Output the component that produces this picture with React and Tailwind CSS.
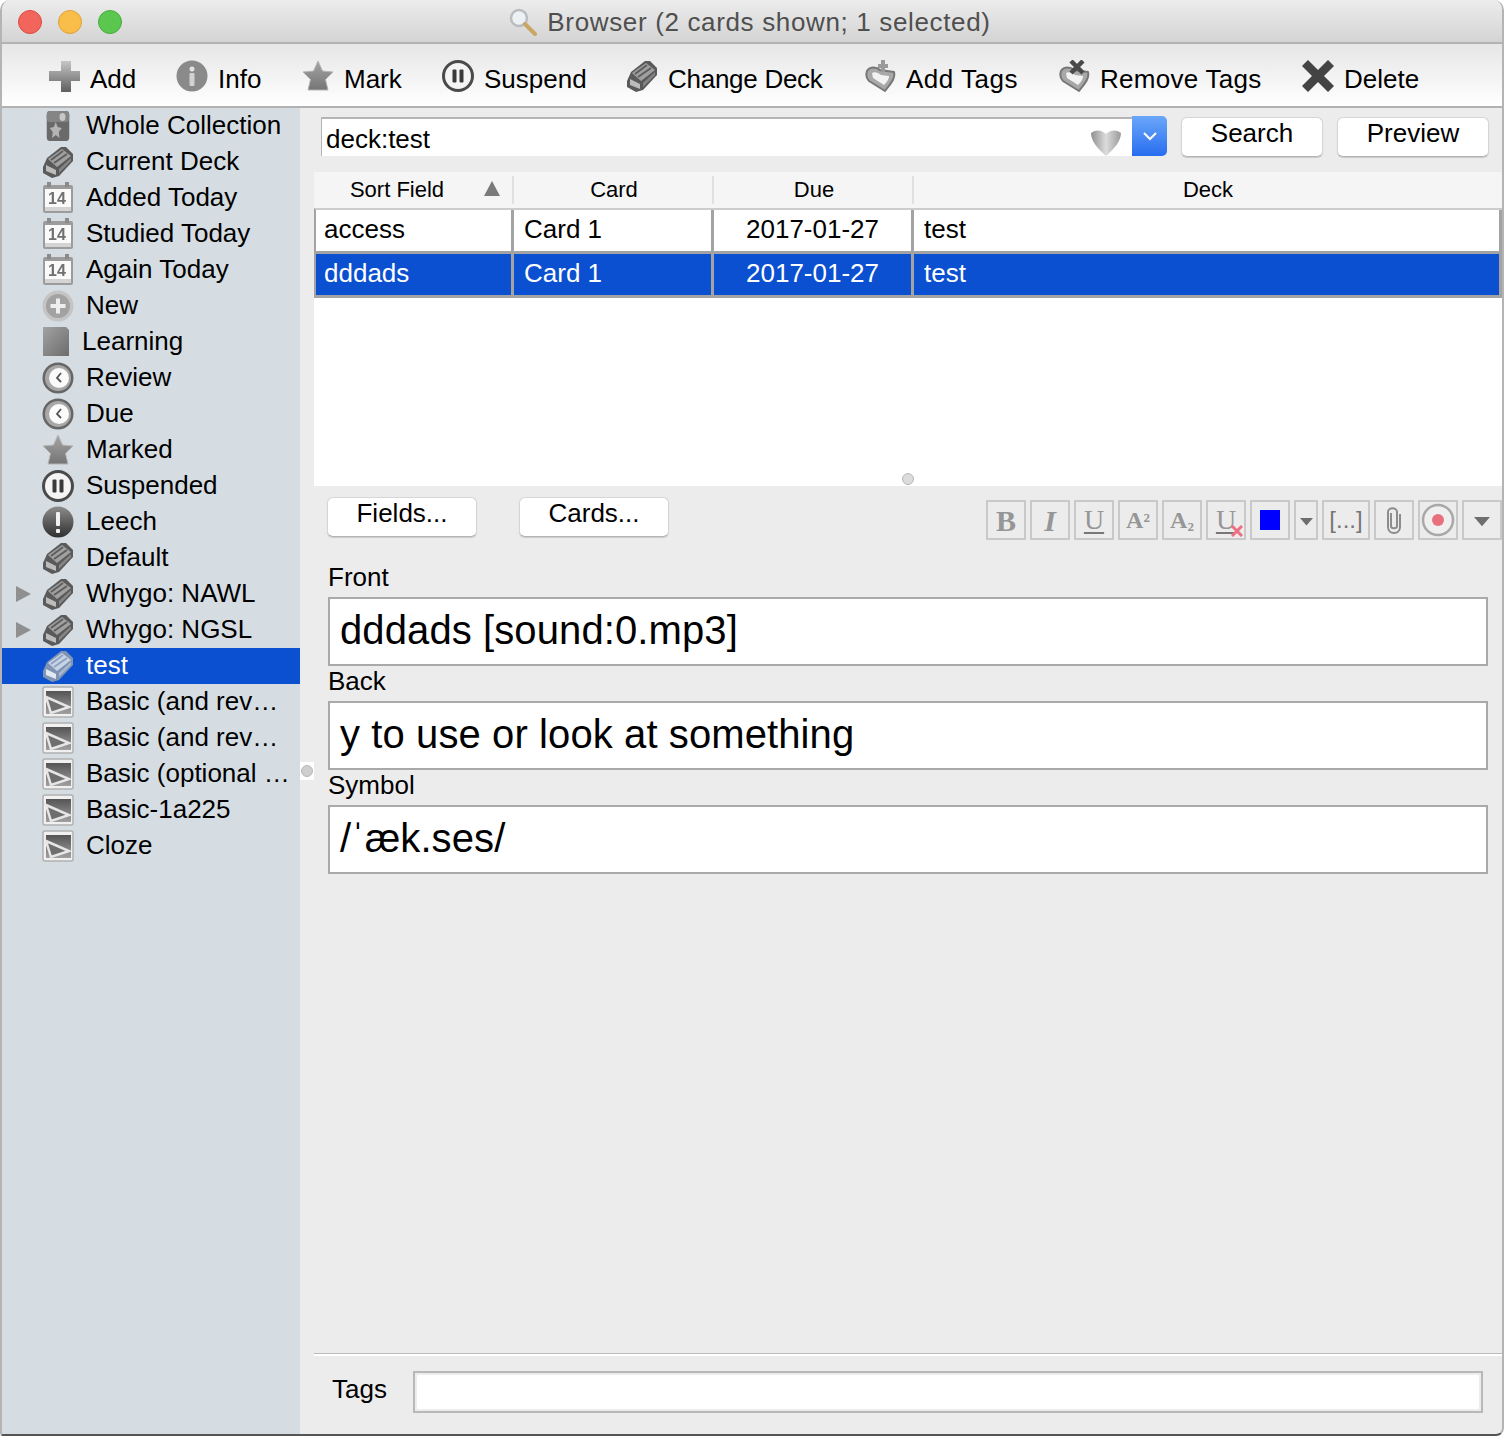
import React from 'react';

// toolbar and sidebar icons, all drawn in the app's grey style
const Deck = ({ selected }) => (
  <svg viewBox="0 0 32 32" className="w-[32px] h-[32px] blur-[0.5px]">
    <path d="M1 21 L5 12 L19 1 L24 1 L31 8 L31 15 L17 30 L10 32 L1 27 Z" fill={selected ? '#7f93b3' : '#5a5a5a'} />
    <path d="M6 13 L20 3 L29 10 L15 21 Z" fill={selected ? '#c7d3e6' : '#a0a0a0'} />
    <path d="M9 14 L21 5 M12 17 L25 8" stroke={selected ? '#8ea2c0' : '#5e5e5e'} strokeWidth="2" />
    <path d="M4 19 L14 24 L14 29 L4 25 Z" fill={selected ? '#e1e8f2' : '#bcbcbc'} />
    <path d="M17 23 L29 12 L29 15 L17 27 Z" fill={selected ? '#a8b8d0' : '#858585'} />
  </svg>
);

const Calendar = () => (
  <svg viewBox="0 0 32 32" className="w-[32px] h-[32px] blur-[0.4px]">
    <rect x="1" y="3" width="30" height="28" rx="2" fill="#9c9c9c" />
    <rect x="5" y="0" width="4" height="5" fill="#8a8a8a" />
    <rect x="23" y="0" width="4" height="5" fill="#8a8a8a" />
    <rect x="3" y="7" width="26" height="18" fill="#fafafa" />
    <rect x="3" y="25" width="26" height="4" fill="#d4d4d4" />
    <text x="15" y="22" textAnchor="middle" fontSize="16" fontWeight="700" fill="#707070" fontFamily="Liberation Sans">14</text>
  </svg>
);

const Clock = () => (
  <svg viewBox="0 0 32 32" className="w-[32px] h-[32px] blur-[0.4px]">
    <circle cx="16" cy="16" r="15.5" fill="#666666" />
    <circle cx="16" cy="16" r="13" fill="#a8a8a8" />
    <circle cx="17" cy="16" r="10" fill="#fbfbfb" />
    <path d="M19 11 L15 16 L19 20" stroke="#555" strokeWidth="1.8" fill="none" />
  </svg>
);

const Star = () => (
  <svg viewBox="0 0 32 32" className="w-[32px] h-[32px] blur-[0.4px]">
    <defs>
      <linearGradient id="starFill" x1="0" y1="0" x2="0" y2="1">
        <stop offset="0" stopColor="#a4a4a4" />
        <stop offset="1" stopColor="#757575" />
      </linearGradient>
    </defs>
    <path d="M16 1 L20.5 11 L31 12 L23.5 19.5 L26 30 L6 30 L8.5 19.5 L1 12 L11.5 11 Z" fill="url(#starFill)" stroke="#b4b4b4" strokeWidth="1" strokeLinejoin="round" />
  </svg>
);

const Pause = () => (
  <svg viewBox="0 0 32 32" className="w-[32px] h-[32px] blur-[0.3px]">
    <circle cx="16" cy="16" r="14.5" fill="#f4f4f4" stroke="#4a4a4a" strokeWidth="3" />
    <rect x="10.5" y="9.5" width="4" height="13" rx="1" fill="#3a3a3a" />
    <rect x="17.5" y="9.5" width="4" height="13" rx="1" fill="#3a3a3a" />
  </svg>
);

const PlusCircle = () => (
  <svg viewBox="0 0 32 32" className="w-[32px] h-[32px] blur-[0.4px]">
    <circle cx="16" cy="16" r="15.5" fill="#c4c4c4" />
    <circle cx="16" cy="16" r="12" fill="#a2a2a2" />
    <path d="M16 8.5 V23.5 M8.5 16 H23.5" stroke="#eeeeee" strokeWidth="4" />
  </svg>
);

const Leech = () => (
  <svg viewBox="0 0 32 32" className="w-[32px] h-[32px] blur-[0.3px]">
    <defs>
      <linearGradient id="leechFill" x1="0" y1="0" x2="0" y2="1">
        <stop offset="0" stopColor="#8c8c8c" />
        <stop offset="1" stopColor="#2f2f2f" />
      </linearGradient>
    </defs>
    <circle cx="16" cy="16" r="15.5" fill="url(#leechFill)" />
    <rect x="14" y="6" width="4" height="14" rx="1" fill="#f2f2f2" />
    <rect x="14" y="23" width="4" height="4" rx="1" fill="#f2f2f2" />
  </svg>
);

const Collection = () => (
  <svg viewBox="0 0 32 32" className="w-[24px] h-[32px] blur-[0.4px]" preserveAspectRatio="none">
    <rect x="1" y="1" width="30" height="30" rx="4" fill="#6a6a6a" />
    <rect x="1" y="1" width="30" height="11" rx="4" fill="#858585" />
    <circle cx="22" cy="7" r="4" fill="#c8c8c8" />
    <path d="M13 12 L15.5 17 L21 18 L17 22 L18 28 L13 25 L8 28 L9 22 L5 18 L10.5 17 Z" fill="#b4b4b4" />
  </svg>
);

const Template = () => (
  <svg viewBox="0 0 32 32" className="w-[32px] h-[32px] blur-[0.4px]">
    <defs>
      <linearGradient id="templateFill" x1="0" y1="0" x2="0" y2="1">
        <stop offset="0" stopColor="#555555" />
        <stop offset="1" stopColor="#a0a0a0" />
      </linearGradient>
    </defs>
    <rect x="1" y="1" width="30" height="30" rx="2" fill="#f0f0f0" stroke="#b0b0b0" strokeWidth="1.5" />
    <rect x="4" y="5" width="25" height="23" fill="url(#templateFill)" />
    <path d="M4 11 L27 21 L9 27 Z" fill="#6e6e6e" stroke="#e6e6e6" strokeWidth="2.5" />
  </svg>
);

const Learning = () => (
  <svg viewBox="0 0 28 32" className="w-[28px] h-[32px] blur-[0.3px]">
    <defs>
      <linearGradient id="learnFill" x1="0" y1="0" x2="1" y2="1">
        <stop offset="0" stopColor="#a2a2a2" />
        <stop offset="1" stopColor="#6c6c6c" />
      </linearGradient>
    </defs>
    <path d="M1 1 H24 L27 4 V30 H1 Z" fill="url(#learnFill)" />
  </svg>
);

const AddPlus = () => (
  <svg viewBox="0 0 32 32" className="w-[32px] h-[32px] blur-[0.4px]">
    <defs>
      <linearGradient id="plusFill" x1="0" y1="0" x2="0" y2="1">
        <stop offset="0" stopColor="#c6c6c6" />
        <stop offset="1" stopColor="#5e5e5e" />
      </linearGradient>
    </defs>
    <path d="M13 1 H23 V11 H32 V21 H23 V32 H13 V21 H1 V11 H13 Z" fill="url(#plusFill)" />
  </svg>
);

const InfoCircle = () => (
  <svg viewBox="0 0 32 32" className="w-[32px] h-[32px] blur-[0.4px]">
    <circle cx="16" cy="16" r="15.5" fill="#8a8a8a" />
    <circle cx="16" cy="9" r="2.5" fill="#e2e2e2" />
    <rect x="13.5" y="13" width="5" height="13" rx="1" fill="#d2d2d2" />
  </svg>
);

const TagHeart = ({ remove }) => (
  <svg viewBox="0 0 32 32" className="w-[32px] h-[32px] blur-[0.4px]">
    <path d="M3 11 C6 6 13 7 16 10 L30 12 C32 20 24 26 21 31 L5 21 C2 18 2 14 3 11 Z" fill="#a8a8a8" stroke="#777" strokeWidth="2" strokeLinejoin="round" />
    <path d="M8 13 C11 11 15 13 17 15 L25 16 C25 20 22 23 20 25 L9 18 Z" fill="#f2f2f2" />
    {remove ? (
      <path d="M13 1 L25 13 M25 1 L13 13" stroke="#4a4a4a" strokeWidth="4.5" />
    ) : (
      <path d="M19 0 V12 M14 6 H24" stroke="#9a9a9a" strokeWidth="4" />
    )}
  </svg>
);

const DeleteX = () => (
  <svg viewBox="0 0 32 32" className="w-[32px] h-[32px] blur-[0.4px]">
    <path d="M6 6 L26 26 M26 6 L6 26" stroke="#444444" strokeWidth="8.5" strokeLinecap="square" />
  </svg>
);

const Heart = () => (
  <svg viewBox="0 0 32 28" className="w-[32px] h-[28px]">
    <defs>
      <linearGradient id="heartFill" x1="0" y1="0" x2="1" y2="0">
        <stop offset="0" stopColor="#8f8f8f" />
        <stop offset="0.5" stopColor="#dcdcdc" />
        <stop offset="1" stopColor="#9a9a9a" />
      </linearGradient>
    </defs>
    <path d="M1 4 C6 0 12 1 16 5 C20 1 26 0 31 4 C31 12 24 20 16 27 C8 20 1 12 1 4 Z" fill="url(#heartFill)" />
  </svg>
);

const Magnifier = () => (
  <svg viewBox="0 0 28 28" className="w-[28px] h-[28px]">
    <circle cx="10" cy="10" r="8" fill="#eef1f4" stroke="#b9bdc2" strokeWidth="2.5" />
    <path d="M16 16 L26 26" stroke="#c9a566" strokeWidth="4" strokeLinecap="round" />
  </svg>
);

const toolbarItems = [
  { icon: <AddPlus />, label: 'Add', width: 'w-[46px]' },
  { icon: <InfoCircle />, label: 'Info', width: 'w-[44px]' },
  { icon: <Star />, label: 'Mark', width: 'w-[58px]' },
  { icon: <Pause />, label: 'Suspend', width: 'w-[102px]' },
  { icon: <Deck />, label: 'Change Deck', width: 'w-[156px] tracking-[-0.27px]' },
  { icon: <TagHeart />, label: 'Add Tags', width: 'w-[112px] tracking-[0.5px]' },
  { icon: <TagHeart remove />, label: 'Remove Tags', width: 'w-[162px] tracking-[0.27px]' },
  { icon: <DeleteX />, label: 'Delete', width: 'w-[74px]' },
];

const sidebarItems = [
  { icon: <Collection />, label: 'Whole Collection' },
  { icon: <Deck />, label: 'Current Deck' },
  { icon: <Calendar />, label: 'Added Today' },
  { icon: <Calendar />, label: 'Studied Today' },
  { icon: <Calendar />, label: 'Again Today' },
  { icon: <PlusCircle />, label: 'New' },
  { icon: <Learning />, label: 'Learning', narrow: true },
  { icon: <Clock />, label: 'Review' },
  { icon: <Clock />, label: 'Due' },
  { icon: <Star />, label: 'Marked' },
  { icon: <Pause />, label: 'Suspended' },
  { icon: <Leech />, label: 'Leech' },
  { icon: <Deck />, label: 'Default' },
  { icon: <Deck />, label: 'Whygo: NAWL', arrow: true },
  { icon: <Deck />, label: 'Whygo: NGSL', arrow: true },
  { icon: <Deck selected />, label: 'test', selected: true },
  { icon: <Template />, label: 'Basic (and rev…' },
  { icon: <Template />, label: 'Basic (and rev…' },
  { icon: <Template />, label: 'Basic (optional …' },
  { icon: <Template />, label: 'Basic-1a225' },
  { icon: <Template />, label: 'Cloze' },
];

const rows = [
  { sort: 'access', card: 'Card 1', due: '2017-01-27', deck: 'test' },
  { sort: 'dddads', card: 'Card 1', due: '2017-01-27', deck: 'test', selected: true },
];

const fields = [
  { label: 'Front', value: 'dddads [sound:0.mp3]' },
  { label: 'Back', value: 'y to use or look at something' },
  { label: 'Symbol', value: '/ˈæk.ses/' },
];

const FormatButton = ({ className = 'w-[40px]', children }) => (
  <div className={`${className} h-[40px] border-2 border-[#c9c9c9] bg-[#ececec] flex items-center justify-center text-[#969696] font-['Liberation_Serif',serif]`}>
    {children}
  </div>
);

const SmallArrow = ({ w = 14 }) => (
  <svg viewBox="0 0 14 8" style={{ width: w }} className="mt-[4px]">
    <path d="M0 0 H14 L7 8 Z" fill="#6e6e6e" />
  </svg>
);

const PlainButton = ({ className, children }) => (
  <button className={`${className} h-[40px] pb-[9px] bg-white rounded-[6px] border border-[#d6d6d6] border-b-[#b5b5b5] shadow-[0_1px_1px_rgba(0,0,0,0.15)] text-[26px] leading-[30px] text-black text-center`}>
    {children}
  </button>
);

export default function App() {
  return (
    <div className="w-[1506px] h-[1436px] bg-white font-['Liberation_Sans',sans-serif] text-black overflow-hidden">
      <div className="relative w-[1504px] h-[1436px] flex flex-col bg-[#ececec] border-x-2 border-x-[#b4b4b4] border-b-2 border-b-[#555555] rounded-t-[10px] rounded-br-[8px] rounded-bl-[3px] overflow-hidden">

        {/* Title bar */}
        <div className="relative h-[44px] shrink-0 flex items-center justify-center gap-[10px] pt-[2px] bg-gradient-to-b from-[#ececec] to-[#d4d4d4] border-b-2 border-[#b2b2b2]">
          <div className="absolute left-[16px] top-[10px] flex gap-[16px]">
            <div className="w-[24px] h-[24px] rounded-full bg-[#f2655c] border border-[#dd4c43]" />
            <div className="w-[24px] h-[24px] rounded-full bg-[#f9bd4a] border border-[#dfa136]" />
            <div className="w-[24px] h-[24px] rounded-full bg-[#5cc74f] border border-[#47ad3c]" />
          </div>
          <Magnifier />
          <span className="mr-[4px] text-[26px] leading-[30px] text-[#4f4f4f] tracking-[0.65px]">Browser (2 cards shown; 1 selected)</span>
        </div>

        {/* Toolbar */}
        <div className="h-[64px] shrink-0 flex items-center gap-[40px] pl-[46px] pt-[2px] bg-gradient-to-b from-[#e6e6e6] to-white border-b-2 border-[#b2b2b2]">
          {toolbarItems.map(item => (
            <div key={item.label} className="flex items-center gap-[10px]">
              {item.icon}
              <span className={`${item.width} text-[26px] leading-[30px] mt-[6px] whitespace-nowrap`}>{item.label}</span>
            </div>
          ))}
        </div>

        <div className="flex flex-1 min-h-0">

          {/* Sidebar */}
          <div className="w-[298px] shrink-0 bg-[#d5dde2]">
            {sidebarItems.map((item, i) => (
              <div key={i} className={`h-[36px] flex items-center ${item.selected ? 'bg-[#0b50d0] text-white' : ''}`}>
                <div className="w-[40px] shrink-0 pl-[14px]">
                  {item.arrow && (
                    <svg viewBox="0 0 15 16" className="w-[15px] h-[16px]">
                      <path d="M0 0 L15 8 L0 16 Z" fill="#8f8f8f" />
                    </svg>
                  )}
                </div>
                <div className={`${item.narrow ? 'w-[28px]' : 'w-[32px]'} shrink-0 flex justify-center`}>{item.icon}</div>
                <span className="ml-[12px] pb-[2px] text-[26px] leading-[30px] whitespace-nowrap">{item.label}</span>
              </div>
            ))}
          </div>

          {/* Main pane */}
          <div className="relative flex-1 min-w-0 flex flex-col pt-[9px]">

            {/* Splitter handle */}
            <div className="absolute left-0 top-[654px] w-[14px] h-[18px] bg-white flex items-center justify-center">
              <div className="w-[12px] h-[12px] rounded-full bg-[#cfcfcf] border border-[#b8b8b8]" />
            </div>

            {/* Search row */}
            <div className="h-[40px] shrink-0 flex pl-[21px]">
              <div className="w-[811px] h-[39px] bg-white border-t-2 border-l border-[#b5b5b5] flex items-center justify-between pl-[4px] pr-[10px]">
                <span className="mt-[2px] text-[26px] leading-[30px]">deck:test</span>
                <div className="mt-[10px]"><Heart /></div>
              </div>
              <div className="w-[35px] h-[40px] -mt-[1px] rounded-r-[5px] bg-gradient-to-b from-[#6ba6f9] to-[#276cef] flex items-center justify-center">
                <svg viewBox="0 0 14 9" className="w-[14px] h-[9px]">
                  <path d="M1 1 L7 7 L13 1" stroke="white" strokeWidth="2" fill="none" />
                </svg>
              </div>
              <PlainButton className="w-[142px] ml-[14px]">Search</PlainButton>
              <PlainButton className="w-[152px] ml-[14px]">Preview</PlainButton>
            </div>

            {/* Card table */}
            <div className="relative h-[314px] shrink-0 mt-[15px] ml-[14px] bg-white">
              <div className="h-[36px] flex bg-[#f5f5f5] text-[22px] leading-[36px] text-center">
                <div className="relative w-[200px] pr-[34px] after:absolute after:right-0 after:top-[4px] after:h-[28px] after:w-[2px] after:bg-[#e0e0e0]">
                  Sort Field
                  <svg viewBox="0 0 16 15" className="absolute left-[170px] top-[9px] w-[16px] h-[15px]">
                    <path d="M8 0 L16 15 H0 Z" fill="#7a7a7a" />
                  </svg>
                </div>
                <div className="relative w-[200px] after:absolute after:right-0 after:top-[4px] after:h-[28px] after:w-[2px] after:bg-[#e0e0e0]">Card</div>
                <div className="relative w-[200px] after:absolute after:right-0 after:top-[4px] after:h-[28px] after:w-[2px] after:bg-[#e0e0e0]">Due</div>
                <div className="flex-1">Deck</div>
              </div>
              <div className="border-t-2 border-t-[#cccccc] border-l-2 border-l-[#a3a3a3]">
                {rows.map(row => (
                  <div
                    key={row.sort}
                    className={`flex h-[44px] leading-[38px] text-[26px] border-b-[3px] border-[#a3a3a3] ${row.selected ? 'bg-[#0b50d0] text-white' : 'bg-white'}`}
                  >
                    <div className="w-[198px] border-r-[3px] border-[#a3a3a3] pl-[8px]">{row.sort}</div>
                    <div className="w-[200px] border-r-[3px] border-[#a3a3a3] pl-[10px]">{row.card}</div>
                    <div className="w-[200px] border-r-[3px] border-[#a3a3a3] text-center">{row.due}</div>
                    <div className="flex-1 border-r-[3px] border-[#a3a3a3] pl-[10px]">{row.deck}</div>
                  </div>
                ))}
              </div>
              <div className="absolute left-[588px] top-[301px] w-[12px] h-[12px] rounded-full bg-[#dcdcdc] border border-[#b8b8b8]" />
            </div>

            {/* Note editor buttons */}
            <div className="h-[43px] shrink-0 mt-[11px] flex">
              <PlainButton className="w-[150px] ml-[27px]">Fields...</PlainButton>
              <PlainButton className="w-[150px] ml-[42px]">Cards...</PlainButton>
              <div className="ml-[317px] mt-[3px] flex gap-[4px]">
                <FormatButton><span className="text-[30px] font-bold">B</span></FormatButton>
                <FormatButton><span className="text-[30px] font-bold italic">I</span></FormatButton>
                <FormatButton><span className="text-[28px] underline underline-offset-[3px] decoration-[#777777]">U</span></FormatButton>
                <FormatButton><span className="text-[24px] font-bold">A<sup className="text-[13px]">2</sup></span></FormatButton>
                <FormatButton><span className="text-[24px] font-bold">A<sub className="text-[13px]">2</sub></span></FormatButton>
                <FormatButton className="w-[40px] relative">
                  <span className="text-[28px] underline underline-offset-[3px] decoration-[#777777]">U</span>
                  <svg viewBox="0 0 12 12" className="absolute right-[1px] bottom-[1px] w-[12px] h-[12px]">
                    <path d="M1 1 L11 11 M11 1 L1 11" stroke="#ef6f82" strokeWidth="3" />
                  </svg>
                </FormatButton>
                <FormatButton><div className="w-[20px] h-[20px] bg-[#0000ff]" /></FormatButton>
                <FormatButton className="w-[24px]"><SmallArrow w={13} /></FormatButton>
                <FormatButton className="w-[48px]"><span className="text-[24px] font-['Liberation_Sans',sans-serif] text-[#777777]">[...]</span></FormatButton>
                <FormatButton>
                  <svg viewBox="0 0 18 30" className="w-[18px] h-[30px]">
                    <path d="M6 8 V21 C6 24 12 24 12 21 V7 C12 2 3 2 3 7 V22 C3 30 15 30 15 22 V9" stroke="#8c8c8c" strokeWidth="2" fill="none" />
                  </svg>
                </FormatButton>
                <FormatButton>
                  <svg viewBox="0 0 34 34" className="w-[34px] h-[34px]">
                    <circle cx="17" cy="17" r="15" fill="#efefef" stroke="#a8a8a8" strokeWidth="2.5" />
                    <circle cx="17" cy="17" r="6" fill="#e8707c" />
                  </svg>
                </FormatButton>
                <FormatButton><SmallArrow w={16} /></FormatButton>
              </div>
            </div>

            {/* Fields */}
            <div className="mt-[22px] pl-[28px] pr-[14px]">
              {fields.map(field => (
                <div key={field.label}>
                  <div className="h-[35px] text-[26px] leading-[30px]">{field.label}</div>
                  <div className="h-[69px] bg-white border-2 border-[#a9a9a9] pl-[10px] text-[40px] tracking-[0.1px] leading-[62px] whitespace-nowrap">{field.value}</div>
                </div>
              ))}
            </div>

            <div className="flex-1" />

            {/* Tags */}
            <div className="h-[81px] shrink-0 ml-[14px] border-t border-[#bcbcbc] shadow-[inset_0_2px_0_#ffffff] flex items-start pt-[17px]">
              <span className="ml-[18px] w-[81px] text-[26px] leading-[36px]">Tags</span>
              <div className="w-[1070px] h-[42px] border-2 border-[#b8b8b8] bg-[#ececec] p-[2px]">
                <div className="w-full h-full bg-white" />
              </div>
            </div>

          </div>
        </div>
      </div>
    </div>
  );
}
